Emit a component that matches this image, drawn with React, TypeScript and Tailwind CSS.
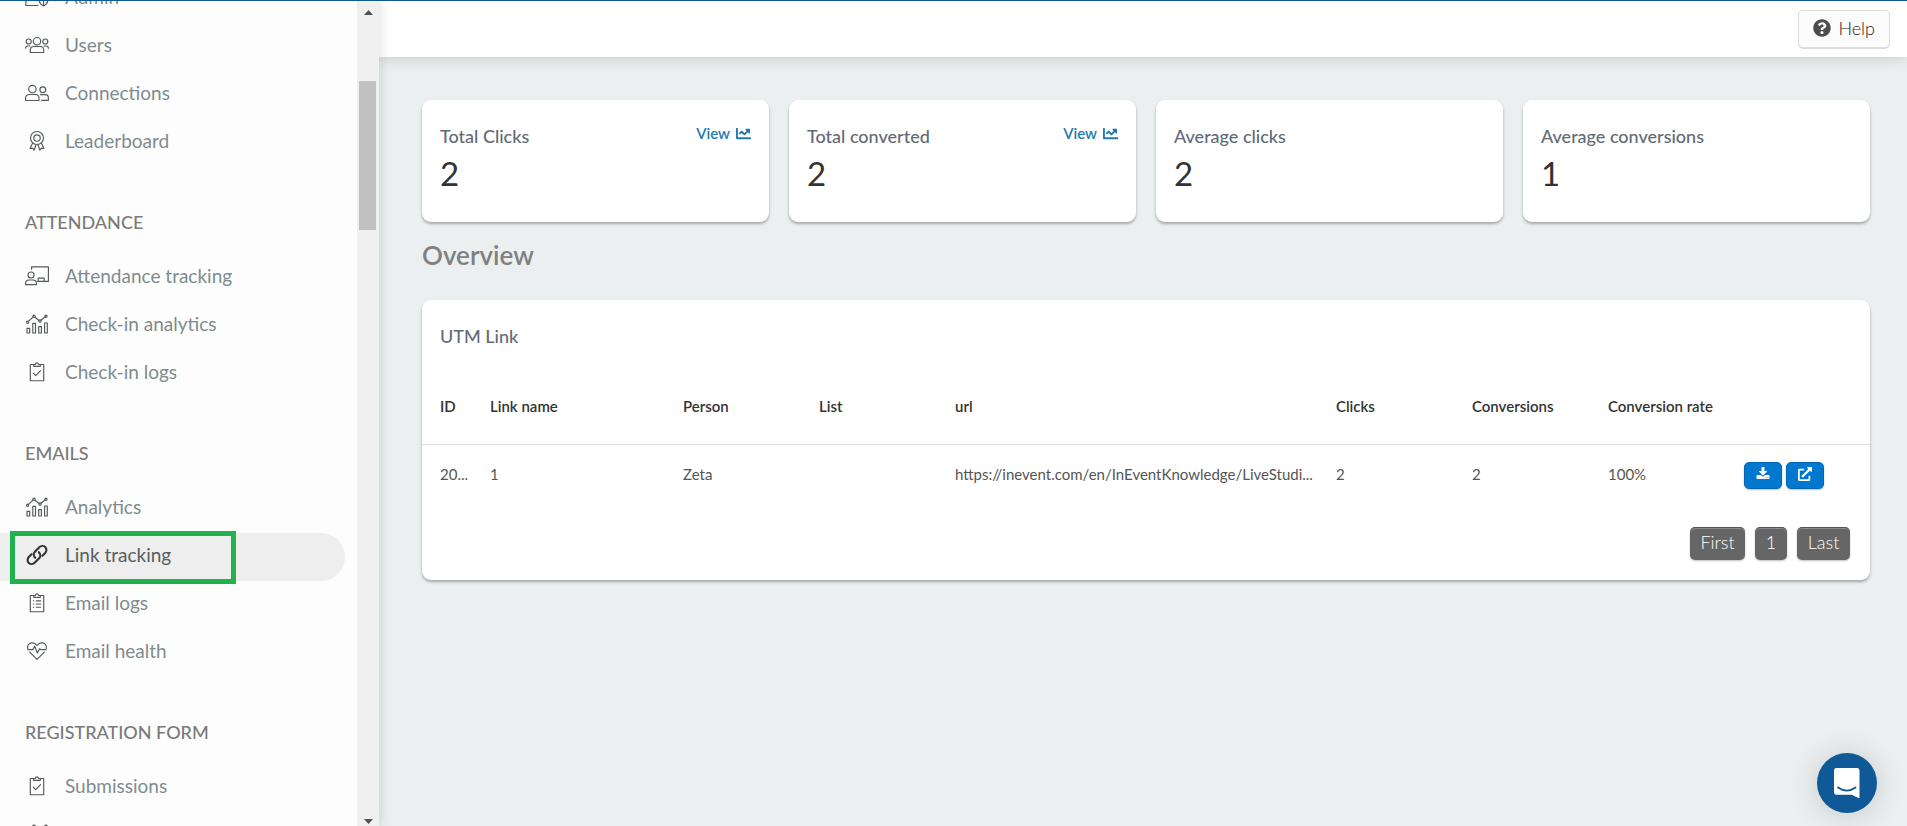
import type { ReactNode } from "react";
import { FaChartLine, FaExternalLinkAlt, FaQuestionCircle } from "react-icons/fa";

/* ---------- icons ---------- */

function Glyph({ children, strong }: { children: ReactNode; strong?: boolean }) {
  return (
    <svg
      aria-hidden="true"
      viewBox="0 0 24 24"
      className="size-6 shrink-0"
      fill="none"
      stroke={strong ? "#333333" : "#55595b"}
      strokeWidth={strong ? 2.1 : 1.15}
      strokeLinecap="round"
      strokeLinejoin="round"
    >
      {children}
    </svg>
  );
}

const AdminIcon = () => (
  <Glyph>
    <circle cx="7.5" cy="8" r="4" />
    <path d="M13 20.5H.8v-2.2c0-2.4 1.8-4.3 4.2-4.3h5c1.500 0 2.700.600 3.400 1.600" />
    <path d="M18.500 11.500l4.500 1.800c.2 3.600-1.400 6.200-4.500 7.700-3.100-1.500-4.700-4.100-4.500-7.700zM18.500 11.500V21" />
  </Glyph>
);

const UsersIcon = () => (
  <Glyph>
    <circle cx="12" cy="8.200" r="3.700" />
    <path d="M5.300 19.500v-2.400c0-2.200 1.500-3.600 3.700-3.600h6c2.200 0 3.700 1.400 3.700 3.600v2.400z" />
    <circle cx="3.700" cy="8.500" r="2.500" />
    <circle cx="20.300" cy="8.500" r="2.500" />
    <path d="M.6 15.200c0-1.400 1-2.200 2.300-2.200h2M23.400 15.200c0-1.400-1-2.200-2.300-2.200h-2" />
  </Glyph>
);

const ConnectionsIcon = () => (
  <Glyph>
    <circle cx="7.400" cy="8" r="3.700" />
    <path d="M.6 19.500v-2.200c0-2.300 1.600-3.800 3.800-3.800h5.800c2.200 0 3.800 1.500 3.800 3.800v2.200z" />
    <circle cx="17.800" cy="8.700" r="2.900" />
    <path d="M15.400 13.600h4.600c2 0 3.400 1.400 3.400 3.400v2.300H16.500" />
  </Glyph>
);

const LeaderboardIcon = () => (
  <Glyph>
    <circle cx="12" cy="9" r="6.500" />
    <circle cx="12" cy="9" r="3.200" />
    <path d="M7.500 14.200l-2.400 5.200 2.600-.2 1.500 1.900 1.800-5.300M16.500 14.200l2.400 5.200-2.600-.2-1.500 1.900-1.800-5.300" />
  </Glyph>
);

const BoardIcon = () => (
  <Glyph>
    <path d="M6.600 5.300V2.800h16.800v14.600H12.600M13.200 17.400v-3.300h6v3.300" />
    <circle cx="6" cy="11" r="3" />
    <path d="M.6 20.600v-1c0-2.200 1.300-3.600 3.400-3.600h4c2.200 0 3.500 1.400 3.500 3.600v1z" />
  </Glyph>
);

const AnalyticsIcon = () => (
  <Glyph>
    <path d="M2 16.300h2.700v4.700H2zM7.800 11.300h2.700V21H7.800zM13.700 14.600h2.700V21h-2.700zM19.600 11h2.700v10h-2.700zM3.400 9.400l4.700-4.300M10 5.300l4 3.200M16 8.200l4.200-3.400" />
    <circle cx="2.600" cy="10.200" r="1.100" />
    <circle cx="9" cy="4.300" r="1.200" />
    <circle cx="15" cy="9.100" r="1.200" />
    <circle cx="21" cy="4.200" r="1.100" />
  </Glyph>
);

const Clipboard = ({ children }: { children: ReactNode }) => (
  <Glyph>
    <path d="M9 4.500H5.300v16.200h13.400V4.500H15" />
    <path d="M8.700 6.300V4.500h1.700a1.600 1.600 0 0 1 3.200 0h1.700v1.800z" />
    {children}
  </Glyph>
);

const ClipboardCheckIcon = () => (
  <Clipboard>
    <path d="M8.300 13.200l2.500 2.500 4.700-5" />
  </Clipboard>
);

const ClipboardListIcon = () => (
  <Clipboard>
    <path d="M8.400 9.800h.4M8.400 13h.4M8.400 16.200h.4M11.300 9.800h4.300M11.300 13h4.300M11.300 16.200h4.300" />
  </Clipboard>
);

const ChainIcon = () => (
  <Glyph strong>
    <path d="M10.200 14.800c-1.900-1.900-1.900-4.600-.1-6.400l4-4c1.800-1.800 4.400-1.900 6.100-.300s1.600 4.300-.200 6.100l-2.600 2.600" />
    <path d="M13.800 9.200c1.900 1.900 1.900 4.600.1 6.400l-4 4c-1.800 1.800-4.400 1.900-6.100.300s-1.600-4.300.200-6.100l2.600-2.600" />
  </Glyph>
);

const HeartIcon = () => (
  <Glyph>
    <path d="M2.800 9.600C2 6.500 3.700 4.300 6.500 3.900c2.200-.3 4.100.700 5.500 2.400 1.400-1.700 3.300-2.700 5.500-2.400 2.800.400 4.500 2.600 3.700 5.700M4.700 13.100L12 20.300l7.300-7.200" />
    <path d="M2.800 10.600h5l1.900-3.300 2.700 6.700 2.200-4.300 1 .9h5.600" />
  </Glyph>
);

const DownloadIcon = () => (
  <svg aria-hidden="true" viewBox="0 0 1792 1792" className="size-[14px]" fill="currentColor">
    <path d="M1344 1344q0-26-19-45t-45-19-45 19-19 45 19 45 45 19 45-19 19-45zm256 0q0-26-19-45t-45-19-45 19-19 45 19 45 45 19 45-19 19-45zm128-224v320q0 40-28 68t-68 28H160q-40 0-68-28t-28-68v-320q0-40 28-68t68-28h465l135 136q58 56 136 56t136-56l136-136h464q40 0 68 28t28 68zm-325-569q17 41-14 70l-448 448q-18 19-45 19t-45-19L403 621q-31-29-14-70 17-39 59-39h256V64q0-26 19-45t45-19h256q26 0 45 19t19 45v448h256q42 0 59 39z" />
  </svg>
);

/* ---------- sidebar ---------- */

type Item = { label: string; icon: () => ReactNode; active?: boolean };
type Section = { title?: string; items: Item[] };

const sections: Section[] = [
  {
    items: [
      { label: "Admin", icon: AdminIcon },
      { label: "Users", icon: UsersIcon },
      { label: "Connections", icon: ConnectionsIcon },
      { label: "Leaderboard", icon: LeaderboardIcon },
    ],
  },
  {
    title: "ATTENDANCE",
    items: [
      { label: "Attendance tracking", icon: BoardIcon },
      { label: "Check-in analytics", icon: AnalyticsIcon },
      { label: "Check-in logs", icon: ClipboardCheckIcon },
    ],
  },
  {
    title: "EMAILS",
    items: [
      { label: "Analytics", icon: AnalyticsIcon },
      { label: "Link tracking", icon: ChainIcon, active: true },
      { label: "Email logs", icon: ClipboardListIcon },
      { label: "Email health", icon: HeartIcon },
    ],
  },
  {
    title: "REGISTRATION FORM",
    items: [
      { label: "Submissions", icon: ClipboardCheckIcon },
      { label: "Form", icon: AnalyticsIcon },
    ],
  },
];

function NavItem({ label, icon: Icon, active }: Item) {
  return (
    <li className="relative mr-3">
      <a
        href="#"
        aria-current={active ? "page" : undefined}
        className={
          active
            ? "flex h-12 items-center gap-4 rounded-r-full bg-[#eeeeee] pb-1 pl-[25px] text-[19px] text-[#5a5d5e]"
            : "flex h-12 items-center gap-4 pb-1 pl-[25px] text-[19px] text-[#7f8c8d]"
        }
      >
        <Icon />
        {label}
      </a>
      {active && (
        <span className="pointer-events-none absolute -top-0.5 left-2.5 h-[53px] w-[226px] border-5 border-[#22b14c]" />
      )}
    </li>
  );
}

function Sidebar() {
  return (
    <aside className="z-10 flex w-[379px] shrink-0 bg-[#fdfdfd] shadow-[0_0_12px_rgba(0,0,0,0.16)]">
      <nav className="min-w-0 flex-1 overflow-hidden">
        <div className="-mt-[26px]">
          {sections.map((section, i) => (
            <section key={i}>
              {section.title && (
                <h2 className="flex h-[87px] items-center pt-6 pl-[25px] text-[18px] font-medium text-[#7a7a7a]">
                  {section.title}
                </h2>
              )}
              <ul>
                {section.items.map((item) => (
                  <NavItem key={item.label} {...item} />
                ))}
              </ul>
            </section>
          ))}
        </div>
      </nav>
      <div aria-hidden="true" className="flex w-[22px] flex-col items-center bg-[#f0f0f0] pt-[9px] pb-0.5">
        <svg viewBox="0 0 9 5" className="h-[5px] w-[9px]" fill="#505050">
          <path d="M4.500 0L9 5H0z" />
        </svg>
        <div className="mt-[66px] mr-0.5 h-[149px] w-[17px] bg-[#c1c1c1]" />
        <svg viewBox="0 0 9 5" className="mt-auto h-[5px] w-[9px]" fill="#505050">
          <path d="M0 0h9L4.500 5z" />
        </svg>
      </div>
    </aside>
  );
}

/* ---------- content ---------- */

const stats = [
  { label: "Total Clicks", value: 2, view: true },
  { label: "Total converted", value: 2, view: true },
  { label: "Average clicks", value: 2, view: false },
  { label: "Average conversions", value: 1, view: false },
];

const cardClass = "rounded-[9px] bg-white shadow-[0_2px_3px_rgba(0,0,0,0.3)]";

function StatCard({ label, value, view }: (typeof stats)[number]) {
  return (
    <article className={`${cardClass} flex h-[122px] items-start justify-between px-[18px] pt-6`}>
      <div>
        <h3 className="text-[18px] leading-6 font-medium text-[#616a76]">{label}</h3>
        <p className="mt-0.5 text-[33px] leading-[46px] text-[#333333]">{value}</p>
      </div>
      {view && (
        <a href="#" className="flex items-center gap-1.5 text-[15px] leading-[18px] font-semibold text-[#1f7aaf]">
          View
          <FaChartLine className="size-[15px]" />
        </a>
      )}
    </article>
  );
}

const columns = [
  { label: "ID", width: "w-[50px]" },
  { label: "Link name", width: "w-[193px]" },
  { label: "Person", width: "w-[136px]" },
  { label: "List", width: "w-[136px]" },
  { label: "url", width: "" },
  { label: "Clicks", width: "w-[136px]" },
  { label: "Conversions", width: "w-[136px]" },
  { label: "Conversion rate", width: "w-[136px]" },
];

const row = [
  "20...",
  "1",
  "Zeta",
  "",
  "https://inevent.com/en/InEventKnowledge/LiveStudi...",
  "2",
  "2",
  "100%",
];

const actionClass =
  "flex h-[27px] items-center justify-center rounded-[5px] border border-[#0467b5] bg-[#0078cf] px-[11px] pb-0.5 text-white shadow-[0_1px_2px_rgba(0,0,0,0.25)]";

const pageClass =
  "h-[33px] rounded-[5px] border-t border-[#555555] bg-[#666666] pb-1 text-[18px] leading-7 font-light text-white shadow-[inset_0_1px_0_#8a8a8a,0_1px_2px_rgba(0,0,0,0.25)]";

function LinkTable() {
  return (
    <section className={`${cardClass} mt-[30px] pb-5`}>
      <h3 className="px-[18px] pt-6 text-[18px] leading-6 font-medium text-[#616a76]">UTM Link</h3>
      <table className="mt-5 w-full table-fixed border-collapse text-left text-[15px]">
        <thead>
          <tr className="h-[76px] border-b border-[#dddfe0] text-[#333333]">
            {columns.map((column) => (
              <th key={column.label} scope="col" className={`${column.width} pl-[18px] font-semibold whitespace-nowrap`}>
                {column.label}
              </th>
            ))}
            <th scope="col" aria-label="Actions" className="w-[144px]" />
          </tr>
        </thead>
        <tbody>
          <tr className="h-[62px] text-[#555555]">
            {row.map((cell, i) => (
              <td key={i} className="truncate pb-0.5 pl-[18px]">
                {cell}
              </td>
            ))}
            <td className="pl-[18px]">
              <div className="flex gap-1">
                <button type="button" aria-label="Download" className={actionClass}>
                  <DownloadIcon />
                </button>
                <button type="button" aria-label="Open link" className={actionClass}>
                  <FaExternalLinkAlt className="size-[14px]" />
                </button>
              </div>
            </td>
          </tr>
        </tbody>
      </table>
      <div className="mt-[21px] flex justify-end gap-2.5 pr-5">
        <button type="button" className={`${pageClass} w-[55px]`}>First</button>
        <button type="button" className={`${pageClass} w-8`}>1</button>
        <button type="button" className={`${pageClass} w-[53px]`}>Last</button>
      </div>
    </section>
  );
}

export default function App() {
  return (
    <div className="flex h-screen overflow-hidden border-t border-[#0f5a96] bg-[#ebeff0] font-[Lato,sans-serif]">
      <Sidebar />
      <div className="flex min-w-0 flex-1 flex-col">
        <header className="flex h-14 shrink-0 items-start justify-end bg-white pt-[9px] pr-[17px] shadow-[0_1px_14px_rgba(0,0,0,0.16)]">
          <button
            type="button"
            className="flex h-[39px] items-center gap-[7px] rounded-[5px] border border-b-2 border-[#dcdcdc] bg-[#fcfcfc] px-[14px] pb-0.5 text-[18px] font-light text-[#222222]"
          >
            <FaQuestionCircle className="size-[18px] text-[#4d4d4d]" />
            Help
          </button>
        </header>
        <main className="flex-1 pt-[43px] pr-[37px] pl-[43px]">
          <div className="grid grid-cols-4 gap-5">
            {stats.map((stat) => (
              <StatCard key={stat.label} {...stat} />
            ))}
          </div>
          <h2 className="mt-[18px] text-[26px] leading-[30px] font-semibold text-[#808080]">Overview</h2>
          <LinkTable />
        </main>
      </div>
      <button
        type="button"
        aria-label="Open chat"
        className="fixed right-[30px] bottom-[13px] flex size-[60px] items-center justify-center rounded-full bg-[#0f5a96] shadow-[0_2px_30px_rgba(0,0,0,0.16)]"
      >
        <svg aria-hidden="true" viewBox="0 0 28 32" className="h-8 w-7">
          <path d="M3.500 1h20A2.500 2.500 0 0 1 26.500 3.500V31.200s-4-1.200-7.500-3.400H3.500A2.500 2.500 0 0 1 1 25.500V3.500A2.500 2.500 0 0 1 3.500 1z" fill="#ffffff" />
          <path d="M5 20.500c5.500 3.900 12 3.900 17.500 0" fill="none" stroke="#0f5a96" strokeWidth="1.900" strokeLinecap="round" />
        </svg>
      </button>
    </div>
  );
}
